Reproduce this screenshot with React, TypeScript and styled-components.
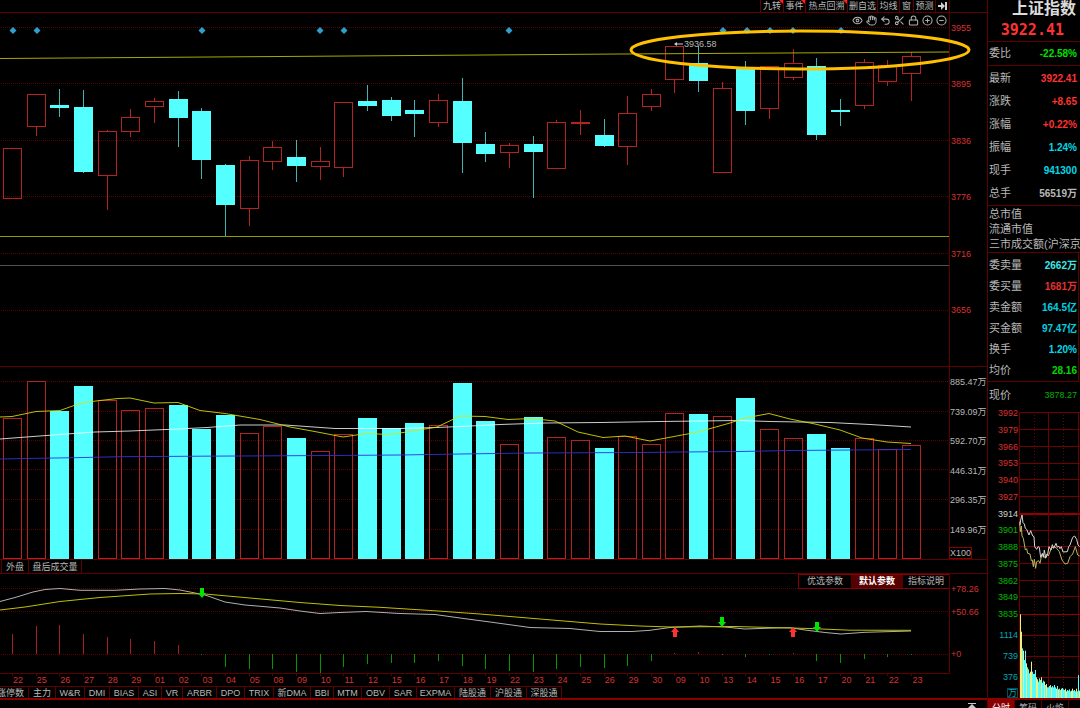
import React from "react";
import styled, { createGlobalStyle } from "styled-components";
import { Eye, Hand, Undo2, Scissors, Lock, CirclePlus, CircleMinus } from "lucide-react";

const LINE = "#5c0000";
const STRONG = "#8a0000";
const RED = "#b42222";
const CYAN = "#54ffff";
const YELLOW = "#a8a800";

const Global = createGlobalStyle`
  * { box-sizing: border-box; }
  html, body { margin: 0; background: #000; }
  body {
    font-family: "Liberation Sans", "Noto Sans CJK SC", sans-serif;
    font-size: 9px;
    color: #b8b8b8;
    overflow: hidden;
  }
  button {
    font: inherit;
    color: inherit;
    background: none;
    border: 0;
    margin: 0;
    padding: 0;
    white-space: nowrap;
  }
  svg { display: block; }
`;

const Page = styled.div`
  display: grid;
  grid-template-columns: minmax(0, 1fr) 93px;
  height: 100vh;
  overflow: hidden;
`;

const Main = styled.main`
  display: flex;
  flex-direction: column;
  min-width: 0;
`;

const Panel = styled.section<{ $rule?: boolean }>`
  display: grid;
  grid-template-columns: minmax(0, 1fr) 38px;
  border-bottom: ${(p) => (p.$rule ? `1px solid ${LINE}` : "0")};
`;

const Plot = styled.div<{ $rule?: boolean }>`
  position: relative;
  border-bottom: ${(p) => (p.$rule ? `1px solid ${LINE}` : "0")};
`;

const Chart = styled.svg<{ $h: number }>`
  width: 100%;
  height: ${(p) => p.$h}px;
  overflow: visible;
`;

const Toolbar = styled.nav`
  display: flex;
  justify-content: flex-end;
  height: 12px;
`;

const ToolButton = styled.button<{ $w: number; $flag?: boolean }>`
  position: relative;
  width: ${(p) => p.$w}px;
  line-height: 12px;
  border-left: 1px solid ${LINE};
  display: flex;
  justify-content: center;
  align-items: center;
  &::after {
    content: "";
    display: ${(p) => (p.$flag ? "block" : "none")};
    position: absolute;
    top: 0;
    right: 0;
    border-top: 4px solid #ff2020;
    border-left: 4px solid transparent;
  }
`;

const IconRow = styled.div`
  position: absolute;
  top: 2px;
  right: 2px;
  display: flex;
  gap: 3px;
  color: #b0b0b0;
  z-index: 1;
  button { width: 11px; height: 11px; }
`;

const Axis = styled.div<{ $top: number; $bottom: number; $color: string; $inset?: number }>`
  display: flex;
  flex-direction: column;
  justify-content: space-between;
  border-left: 1px solid ${LINE};
  padding: ${(p) => p.$top}px 0 ${(p) => p.$bottom}px ${(p) => p.$inset ?? 1}px;
  line-height: 14px;
  color: ${(p) => p.$color};
  white-space: nowrap;
`;

const VolumeAxis = styled.div`
  display: flex;
  flex-direction: column;
  align-items: flex-start;
  justify-content: space-between;
`;

const VolumeScale = styled(Axis)`
  flex: 1;
  width: 100%;
`;

const Unit = styled.span`
  border: 1px solid ${STRONG};
  line-height: 10px;
  height: 12px;
`;

const OscAxis = styled.div`
  display: grid;
  grid-template-rows: 23px 42px 14px;
  border-left: 1px solid ${LINE};
  padding: 8px 0 0 1px;
  line-height: 14px;
  color: #d03030;
`;

const TabRow = styled.nav<{ $h: number; $shift: number }>`
  display: flex;
  height: ${(p) => p.$h}px;
  margin-left: ${(p) => p.$shift}px;
`;

const Tab = styled.button<{ $w: number; $top?: boolean }>`
  width: ${(p) => p.$w}px;
  border-right: 1px solid ${LINE};
  border-top: ${(p) => (p.$top ? `1px solid ${LINE}` : "0")};
  display: flex;
  align-items: center;
  justify-content: center;
  line-height: 10px;
  &:first-child { border-left: 1px solid ${LINE}; }
`;

const VolumeTabs = styled.div`
  border-bottom: 1px solid ${LINE};
`;

const Params = styled.div`
  position: absolute;
  top: 0;
  right: 0;
  display: grid;
  grid-template-columns: 52px 52px 46px;
  border: 1px solid ${STRONG};
  border-width: 1px 0 1px 1px;
  z-index: 1;
`;

const Param = styled.button<{ $on?: boolean }>`
  height: 13px;
  line-height: 13px;
  background: ${(p) => (p.$on ? "#560000" : "#000")};
  color: ${(p) => (p.$on ? "#fff" : "#b8b8b8")};
  font-weight: ${(p) => (p.$on ? 700 : 400)};
`;

const Dates = styled.div`
  display: flex;
  height: 12px;
  padding: 0 13px;
  margin-right: 38px;
  line-height: 12px;
  color: #d83030;
  span {
    flex: 1;
    min-width: 0;
  }
`;

const Footer = styled.footer`
  flex: 1;
  border-top: 2px solid ${STRONG};
  display: flex;
  justify-content: flex-end;
  padding: 3px 10px 0 0;
  overflow: hidden;
`;

const Side = styled.aside`
  display: flex;
  flex-direction: column;
  border-left: 1px solid ${LINE};
  overflow: hidden;
  white-space: nowrap;
`;

const Head = styled.header`
  height: 42px;
  border-bottom: 1px solid ${LINE};
`;

const Title = styled.h1`
  margin: 0;
  padding-right: 4px;
  font: 700 16px/17px "Liberation Serif", "Noto Sans CJK SC", serif;
  color: #dcdcdc;
  text-align: right;
`;

const Price = styled.div`
  padding-right: 16px;
  font: 700 15px/27px "DejaVu Sans Mono", monospace;
  color: #ff3232;
  text-align: right;
`;

const Block = styled.section<{ $row: number; $pad: number; $edge?: boolean }>`
  padding-top: ${(p) => p.$pad}px;
  line-height: ${(p) => p.$row}px;
  border-bottom: 1px solid ${LINE};
  border-right: ${(p) => (p.$edge ? `1px solid ${LINE}` : "0")};
  margin-right: ${(p) => (p.$edge ? 1 : 0)}px;
  padding-right: ${(p) => (p.$edge ? 1 : 3)}px;
  font-size: 11px;
  overflow: hidden;
`;

const Quote = styled.div<{ $color: string; $plain?: boolean }>`
  display: flex;
  justify-content: space-between;
  padding-left: 1px;
  b {
    font-size: ${(p) => (p.$plain ? 9 : 10)}px;
    font-weight: ${(p) => (p.$plain ? 400 : 700)};
    color: ${(p) => p.$color};
  }
`;

const Wide = styled.div`
  padding-left: 1px;
`;

const Current = styled.section`
  height: 25px;
  line-height: 27px;
  font-size: 11px;
  padding-right: 3px;
`;

const Mini = styled.section`
  display: grid;
  grid-template-columns: 31px minmax(0, 1fr);
  height: 291px;
`;

const MiniAxis = styled.div`
  display: flex;
  flex-direction: column;
  align-items: flex-end;
  padding-right: 1px;
`;

const MiniPrices = styled.div`
  display: flex;
  flex-direction: column;
  justify-content: space-between;
  height: 213px;
  line-height: 12px;
  margin-bottom: 5px;
`;

const Tick = styled.span<{ $color: string }>`
  color: ${(p) => p.$color};
`;

const MiniVolumes = styled.div`
  display: flex;
  flex-direction: column;
  align-items: flex-end;
  line-height: 21px;
  color: #00a8b8;
`;

const MiniUnit = styled.span`
  border: 1px solid #005058;
  line-height: 8px;
  color: #00a8b8;
`;

const SideTabs = styled.nav`
  display: flex;
  flex: 1;
  border-top: 2px solid ${STRONG};
  overflow: hidden;
`;

const SideTab = styled.button<{ $on?: boolean }>`
  width: 27px;
  flex: none;
  height: 16px;
  line-height: 14px;
  border-right: 1px solid ${LINE};
  background: ${(p) => (p.$on ? STRONG : "#000")};
  color: ${(p) => (p.$on ? "#fff" : "#b8b8b8")};
`;

/* direction, body top, body bottom, high, low, volume bar top, histogram end */
type Bar = ["u" | "d", number, number, number, number, number, number];
const bars: Bar[] = [
  ["u", 148, 198, 148, 198, 418, 634],
  ["u", 94, 126, 94, 135, 381, 626],
  ["d", 105, 108, 89, 116, 411, 625],
  ["d", 107, 172, 90, 172, 386, 634],
  ["u", 131, 175, 130, 209, 400, 637],
  ["u", 117, 131, 109, 136, 410, 639],
  ["u", 101, 106, 98, 122, 408, 641],
  ["d", 99, 118, 91, 146, 405, 645],
  ["d", 111, 160, 108, 178, 429, 655],
  ["d", 165, 205, 164, 236, 415, 667],
  ["u", 160, 208, 156, 225, 433, 669],
  ["u", 147, 161, 141, 169, 426, 669],
  ["d", 157, 166, 140, 181, 438, 672],
  ["u", 161, 166, 147, 179, 451, 673],
  ["u", 102, 167, 102, 176, 434, 667],
  ["d", 101, 106, 85, 110, 418, 664],
  ["d", 100, 116, 97, 120, 428, 663],
  ["d", 110, 114, 100, 136, 423, 663],
  ["u", 100, 122, 94, 126, 425, 661],
  ["d", 101, 143, 78, 172, 383, 666],
  ["d", 144, 154, 132, 161, 421, 669],
  ["u", 145, 152, 143, 167, 444, 671],
  ["d", 144, 152, 136, 197, 417, 672],
  ["u", 122, 168, 120, 168, 437, 669],
  ["u", 122, 123, 110, 134, 440, 667],
  ["d", 135, 146, 119, 146, 448, 668],
  ["u", 113, 146, 96, 164, 436, 666],
  ["u", 94, 106, 89, 110, 444, 661],
  ["u", 46, 79, 46, 92, 413, 653],
  ["d", 63, 81, 46, 91, 414, 652],
  ["u", 88, 172, 82, 172, 416, 655],
  ["d", 68, 111, 61, 124, 398, 657],
  ["u", 66, 108, 66, 118, 429, 655],
  ["u", 63, 77, 49, 79, 438, 653],
  ["d", 66, 135, 58, 139, 434, 661],
  ["d", 110, 112, 99, 125, 448, 663],
  ["u", 62, 105, 59, 108, 438, 659],
  ["u", 65, 81, 60, 85, 449, 657],
  ["u", 56, 73, 52, 100, 445, 655],
];

const dates =
  "22 25 26 27 28 29 01 02 03 04 05 08 09 10 11 12 15 16 17 18 19 22 23 24 25 26 29 30 09 10 13 14 15 16 17 20 21 22 23".split(" ");

const centre = (i: number) => Math.floor(12.5 + 23.66 * i);

const Grid = ({ ys }: { ys: number[] }) => (
  <g stroke="#5c0000" strokeDasharray="1 1" shapeRendering="crispEdges">
    {ys.map((y) => (
      <path key={y} d={`M1 ${y + 0.5}H949`} />
    ))}
  </g>
);

const Candle = ({ i, bar }: { i: number; bar: Bar }) => {
  const [dir, top, bottom, high, low] = bar;
  const x = centre(i);
  const wick = `M${x + 0.5} ${high}V${top}M${x + 0.5} ${bottom}V${low + 1}`;
  return dir === "u" ? (
    <g stroke={RED} fill="none">
      <path d={wick} />
      <rect x={x - 8.5} y={top + 0.5} width={18} height={bottom - top} />
    </g>
  ) : (
    <g>
      <path d={wick} stroke="#43b4b4" />
      <rect x={x - 9} y={top} width={19} height={bottom - top} fill={CYAN} />
    </g>
  );
};

const VolumeBar = ({ i, bar }: { i: number; bar: Bar }) => {
  const x = centre(i);
  const top = bar[5];
  return bar[0] === "u" ? (
    <rect x={x - 8.5} y={top + 0.5} width={18} height={558 - top} stroke={RED} fill="none" />
  ) : (
    <rect x={x - 9} y={top} width={19} height={559 - top} fill={CYAN} />
  );
};

const Diamond = ({ x }: { x: number }) => <path d={`M${x} 27l3.5 3.5l-3.5 3.5l-3.5 -3.5z`} fill="#2f9fd0" />;

const Arrow = ({ x, y, up }: { x: number; y: number; up?: boolean }) => (
  <path
    d={up ? `M${x} ${y - 5}l4 5h-2v5h-4v-5h-2z` : `M${x} ${y + 5}l4 -5h-2v-5h-4v5h-2z`}
    fill={up ? "#ff3232" : "#00e400"}
  />
);

const tools: [string, number, boolean?][] = [
  ["九转", 23, true],
  ["事件", 22, true],
  ["热点回溯", 42, true],
  ["删自选", 30],
  ["均线", 22],
  ["窗", 14],
  ["预测", 22],
];

const chartIcons: [string, React.ElementType][] = [
  ["显示", Eye],
  ["平移", Hand],
  ["撤销", Undo2],
  ["剪切", Scissors],
  ["锁定", Lock],
  ["放大", CirclePlus],
  ["缩小", CircleMinus],
];

const indicators: [string, number][] = [
  ["涨停数", 37], ["主力", 27], ["W&R", 29], ["DMI", 25], ["BIAS", 29], ["ASI", 23], ["VR", 21],
  ["ARBR", 34], ["DPO", 28], ["TRIX", 29], ["新DMA", 37], ["BBI", 23], ["MTM", 28], ["OBV", 28],
  ["SAR", 27], ["EXPMA", 38], ["陆股通", 36], ["沪股通", 36], ["深股通", 35],
];

const quotes: [string, string, string][] = [
  ["最新", "3922.41", "#ff3232"],
  ["涨跌", "+8.65", "#ff3232"],
  ["涨幅", "+0.22%", "#ff3232"],
  ["振幅", "1.24%", "#00d8e8"],
  ["现手", "941300", "#00d8e8"],
  ["总手", "56519万", "#b8b8b8"],
];

const flows: [string, string, string][] = [
  ["委卖量", "2662万", "#3fe6e6"],
  ["委买量", "1681万", "#e03030"],
  ["卖金额", "164.5亿", "#00d0e0"],
  ["买金额", "97.47亿", "#00d0e0"],
  ["换手", "1.20%", "#00d8e8"],
  ["均价", "28.16", "#00d800"],
];

const miniPrices = [3992, 3979, 3966, 3953, 3940, 3927, 3914, 3901, 3888, 3875, 3862, 3849, 3835];

const miniTops = [
  643, 695, 745, 752, 780, 752, 790, 802, 808, 820, 815, 785, 815, 822, 822, 810, 832, 838, 845, 835,
  840, 832, 848, 842, 845, 855, 852, 862, 862, 858, 855, 862, 858, 862, 855, 862, 866, 858, 868, 866,
  870, 866, 864, 868, 870, 866, 874, 870, 872, 868, 874, 872, 866, 872, 870, 874, 866, 874, 825, 872,
];

export default function App() {
  return (
    <>
      <Global />
      <Page>
        <Main>
          <Panel $rule>
            <Toolbar>
              {tools.map(([name, w, flag]) => (
                <ToolButton key={name} $w={w} $flag={flag}>
                  {name}
                </ToolButton>
              ))}
              <ToolButton $w={14} aria-label="展开">
                <svg width="9" height="8" viewBox="0 0 9 8" fill="#d0d0d0">
                  <path d="M0 3h3V0l4 4l-4 4V5H0zM7 0h2v8H7z" />
                </svg>
              </ToolButton>
            </Toolbar>
            <Axis $top={0} $bottom={0} $color="#d03030" />
          </Panel>

          <Panel $rule>
            <Plot>
              <IconRow>
                {chartIcons.map(([name, Icon]) => (
                  <button key={name} aria-label={name}>
                    <Icon size={11} strokeWidth={2.2} />
                  </button>
                ))}
              </IconRow>
              <Chart $h={353} viewBox="0 13 949 353" preserveAspectRatio="none">
                <Grid ys={[27, 83, 140, 196, 253, 310]} />
                {[13, 37, 202, 320, 344, 509, 723, 747, 770, 793, 841].map((x) => (
                  <Diamond key={x} x={x} />
                ))}
                {bars.map((bar, i) => (
                  <Candle key={i} i={i} bar={bar} />
                ))}
                <path d="M0 58.5L280 56.5L620 54L949 52" stroke={YELLOW} fill="none" />
                <path d="M0 236.5H949" stroke="#969600" />
                <path d="M0 265.5H949" stroke="#505050" />
                <path d="M674 44l3 -2v1.5h6v1h-6v1.5z" fill="#d0d0d0" />
                <text x="684" y="47" fontSize="9" fill="#b8b8b8">
                  3936.58
                </text>
                <ellipse cx="800" cy="50" rx="169" ry="19" fill="none" stroke="#ffc000" strokeWidth="3" />
              </Chart>
            </Plot>
            <Axis $top={8} $bottom={49} $color="#d83030">
              {[3955, 3895, 3836, 3776, 3716, 3656].map((v) => (
                <span key={v}>{v}</span>
              ))}
            </Axis>
          </Panel>

          <Panel $rule>
            <Plot>
              <Chart $h={192} viewBox="0 367 949 192" preserveAspectRatio="none">
                <Grid ys={[381, 411, 440, 469, 499, 529]} />
                {bars.map((bar, i) => (
                  <VolumeBar key={i} i={i} bar={bar} />
                ))}
                <g fill="none">
                  <path
                    stroke="#fff"
                    strokeOpacity="0.8"
                    d="M0 439L33 436.5L60 434.5L95 432L130 431L178 429L207 427.5L240 425L285 425L335 428.5L400 428.5L437 427.5L470 426L500 424.5L545 423L600 422.5L660 421.5L740 420.5L770 421.5L830 422.5L870 424.5L911 427"
                  />
                  <path
                    stroke="#e0e000"
                    strokeOpacity="0.85"
                    d="M0 417L12 416.5L36 411.5L60 410.5L74 405.5L84 402.5L100 400.5L118 398.5L130 398L154 403L178 402.5L200 410.5L225 413.5L260 419.5L290 427L320 432.5L343 437L366 433.5L390 434.5L413 431L437 427L460 416L485 416.5L508 419.5L531 418.5L555 421L578 432L603 437.5L625 436L650 441L698 432L730 423L745 418L769 413.5L790 419L815 424L840 430L862 438L887 442L911 443.5"
                  />
                  <path
                    stroke="#3232d8"
                    strokeOpacity="0.9"
                    d="M0 459L24 458.5L75 457.7L120 456.7L200 456.2L330 455.5L400 455L460 454L530 453L640 452.5L680 452L740 451.5L790 450.5L850 450L911 449.5"
                  />
                </g>
              </Chart>
            </Plot>
            <VolumeAxis>
              <VolumeScale $top={8} $bottom={10} $color="#b8b8b8" $inset={0}>
                {["885.47", "739.09", "592.70", "446.31", "296.35", "149.96"].map((v) => (
                  <span key={v}>{v}万</span>
                ))}
              </VolumeScale>
              <Unit>X100</Unit>
            </VolumeAxis>
          </Panel>

          <VolumeTabs>
            <TabRow $h={13} $shift={1}>
              <Tab $w={28}>外盘</Tab>
              <Tab $w={53}>盘后成交量</Tab>
            </TabRow>
          </VolumeTabs>

          <Panel>
            <Plot $rule>
              <Params>
                <Param>优选参数</Param>
                <Param $on>默认参数</Param>
                <Param>指标说明</Param>
              </Params>
              <Chart $h={99} viewBox="0 574 949 99" preserveAspectRatio="none">
                <Grid ys={[588, 611, 654]} />
                {bars.map((bar, i) => {
                  const end = bar[6];
                  const x = centre(i) + 0.5;
                  return <path key={i} d={`M${x} 654V${end}`} stroke={end < 654 ? "#a42020" : "#009a00"} />;
                })}
                <g fill="none">
                  <path
                    stroke="#b0b0b0"
                    d="M0 601.5L15 597.5L33 592L45 589.5L60 588.5L80 590.3L115 590.3L140 589L165 588.5L180 590L195 593L205 595L225 602L245 605L280 608L300 611L320 613.5L340 612.5L366 611.5L400 613.5L435 614.5L460 618L490 622L530 627.5L570 628.5L600 631.5L632 631.5L650 630.3L670 627.5L700 626L725 627L745 629L775 628L790 627.7L805 630L825 632.5L841 634L865 632.3L911 631"
                  />
                  <path
                    stroke="#c0c000"
                    d="M0 610L25 607L60 601.5L100 597.5L150 594L180 593.5L205 594L250 598L300 602.5L340 605.5L380 607.3L435 610.8L480 614L540 619L600 624L640 626L670 627L735 626.5L770 627.5L810 628.5L850 630.2L911 630.3"
                  />
                </g>
                <Arrow x={202} y={593} />
                <Arrow x={722} y={622} />
                <Arrow x={817} y={627} />
                <Arrow x={675} y={632} up />
                <Arrow x={793} y={632} up />
                <g stroke={LINE}>
                  {bars.map((_, i) => (
                    <path key={i} d={`M${centre(i) + 0.5} 674v2`} />
                  ))}
                </g>
              </Chart>
            </Plot>
            <OscAxis>
              <span>+78.26</span>
              <span>+50.66</span>
              <span>+0</span>
            </OscAxis>
          </Panel>

          <Dates>
            {dates.map((d, i) => (
              <span key={i}>{d}</span>
            ))}
          </Dates>

          <TabRow $h={12} $shift={-8}>
            {indicators.map(([name, w]) => (
              <Tab key={name} $w={w} $top>
                {name}
              </Tab>
            ))}
          </TabRow>

          <Footer>
            <svg width="10" height="10" viewBox="0 0 10 10" fill="#c8c8c8">
              <path d="M1 0h8v1H1zM5 1l4 4H6.5v5h-3V5H1z" />
            </svg>
          </Footer>
        </Main>

        <Side>
          <Head>
            <Title>上证指数</Title>
            <Price>3922.41</Price>
          </Head>
          <Block $row={23} $pad={0}>
            <Quote $color="#00e000">
              <span>委比</span>
              <b>-22.58%</b>
            </Quote>
          </Block>
          <Block $row={23} $pad={1}>
            {quotes.map(([label, value, color]) => (
              <Quote key={label} $color={color}>
                <span>{label}</span>
                <b>{value}</b>
              </Quote>
            ))}
          </Block>
          <Block $row={15} $pad={1}>
            <Wide>总市值</Wide>
            <Wide>流通市值</Wide>
            <Wide>三市成交额(沪深京)</Wide>
          </Block>
          <Block $row={21} $pad={2} $edge>
            {flows.map(([label, value, color]) => (
              <Quote key={label} $color={color}>
                <span>{label}</span>
                <b>{value}</b>
              </Quote>
            ))}
          </Block>
          <Current>
            <Quote $color="#00b000" $plain>
              <span>现价</span>
              <b>3878.27</b>
            </Quote>
          </Current>
          <Mini>
            <MiniAxis>
              <MiniPrices>
                {miniPrices.map((v) => (
                  <Tick key={v} $color={v > 3914 ? "#d83030" : v === 3914 ? "#d0d0d0" : "#00b800"}>
                    {v}
                  </Tick>
                ))}
              </MiniPrices>
              <MiniVolumes>
                <span>1114</span>
                <span>739</span>
                <span>376</span>
              </MiniVolumes>
              <MiniUnit>万</MiniUnit>
            </MiniAxis>
            <Chart $h={291} viewBox="117 21 183 873" preserveAspectRatio="none">
              <g stroke="#700000" strokeWidth="3" shapeRendering="crispEdges">
                {[37, 88, 138, 190, 239, 289, 341, 390, 439, 490, 541, 590, 642, 706, 770, 832].map((y) => (
                  <path
                    key={y}
                    d={`M118 ${y}H300`}
                    stroke={y === 341 || y === 642 ? "#980000" : "#700000"}
                    strokeWidth={y === 341 ? 6 : 3}
                  />
                ))}
                <path d="M119 37V894M206 37V894M296 37V894" />
                <path d="M164 37V894M250 37V894" strokeDasharray="3 6" />
              </g>
              {miniTops.map((top, i) => (
                <rect
                  key={i}
                  x={120 + i * 3}
                  y={top}
                  width="3"
                  height={894 - top}
                  fill={i % 5 === 1 || i % 7 === 3 || i === 0 ? "#f0f080" : CYAN}
                />
              ))}
              <g fill="none" strokeWidth="3" strokeLinejoin="round">
                <path
                  stroke="#b8b860"
                  d="M119 365L121 395L124 378L126 408L130 415L136 450L140 446L143 460L150 462L154 482L157 480L160 500L163 478L167 505L170 485L176 482L180 490L184 470L188 462L196 475L200 462L205 468L214 445L222 440L230 445L238 455L246 480L255 492L263 490L270 470L278 462L286 440L293 465L299 468"
                />
                <path
                  stroke="#d8d8d8"
                  d="M120 375L122 360L126 345L129 368L133 372L136 385L140 388L147 405L152 392L158 408L162 410L164 440L170 448L174 440L178 442L182 472L187 460L190 472L193 450L197 474L203 462L207 440L213 450L217 434L221 445L228 430L232 442L236 438L240 446L244 440L249 456L262 455L266 440L270 435L278 412L284 408L290 418L294 435L299 440"
                />
              </g>
            </Chart>
          </Mini>
          <SideTabs>
            <SideTab $on>分时</SideTab>
            <SideTab>筹码</SideTab>
            <SideTab>火焰</SideTab>
          </SideTabs>
        </Side>
      </Page>
    </>
  );
}
